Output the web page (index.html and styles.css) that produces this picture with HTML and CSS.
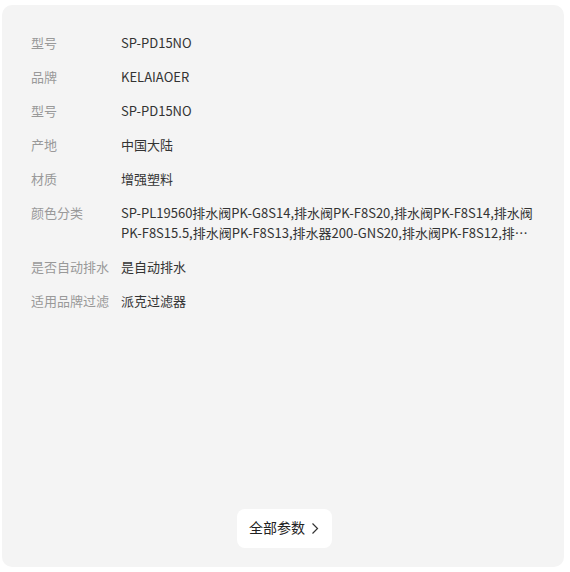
FILE: index.html
```html
<!DOCTYPE html>
<html lang="zh-CN">
<head>
  <meta charset="UTF-8" />
  <title>商品参数</title>
  <link rel="stylesheet" href="styles.css">
</head>
<body>
  <!-- Parameter panel -->
  <div class="params">
    <div class="param-list">
      <div class="param-row">
        <span class="param-label">型号</span>
        <span class="param-value">SP-PD15NO</span>
      </div>
      <div class="param-row">
        <span class="param-label">品牌</span>
        <span class="param-value">KELAIAOER</span>
      </div>
      <div class="param-row">
        <span class="param-label">型号</span>
        <span class="param-value">SP-PD15NO</span>
      </div>
      <div class="param-row">
        <span class="param-label">产地</span>
        <span class="param-value">中国大陆</span>
      </div>
      <div class="param-row">
        <span class="param-label">材质</span>
        <span class="param-value">增强塑料</span>
      </div>
      <div class="param-row">
        <span class="param-label">颜色分类</span>
        <span class="param-value clamp">SP-PL19560排水阀PK-G8S14,排水阀PK-F8S20,排水阀PK-F8S14,排水阀PK-F8S15.5,排水阀PK-F8S13,排水器200-GNS20,排水阀PK-F8S12,排水阀PK-F8S10</span>
      </div>
      <div class="param-row">
        <span class="param-label">是否自动排水</span>
        <span class="param-value">是自动排水</span>
      </div>
      <div class="param-row">
        <span class="param-label">适用品牌过滤</span>
        <span class="param-value">派克过滤器</span>
      </div>
    </div>

    <!-- Show all button -->
    <button class="more-btn">全部参数
      <svg class="chevron" width="8" height="13" viewBox="0 0 8 13"><path d="M1.5 1.5 L6.5 6.5 L1.5 11.5" fill="none" stroke="#333" stroke-width="1.2"/></svg>
    </button>
  </div>
</body>
</html>
```

FILE: styles.css
```css
body {
  margin: 0;
  background: #fff;
  font-family: "Noto Sans CJK SC", sans-serif;
}

/* grey card holding all params */
.params {
  box-sizing: border-box;
  width: 562px;
  height: 562px;
  margin: 5px 0 0 2px;
  padding: 28px 27px 19px 29px;
  background: #f4f4f4;
  border-radius: 10px;
  display: flex;
  flex-direction: column;
}

.param-row {
  display: flex;
  font-size: 13px;
  line-height: 20px;
  margin-bottom: 14px;
}

.param-label {
  flex: none;
  width: 90px;
  color: #999;
  white-space: nowrap;
}

.param-value {
  color: #333;
  flex: 1;
  min-width: 0;
}

/* long value limited to two lines */
.clamp {
  display: -webkit-box;
  -webkit-line-clamp: 2;
  -webkit-box-orient: vertical;
  max-height: 40px;
  overflow: hidden;
}

.more-btn {
  margin: auto auto 0;
  height: 39px;
  width: 95px;
  padding: 0 0 4px 0;
  border: none;
  border-radius: 8px;
  background: #fff;
  color: #222;
  font-family: inherit;
  font-size: 14px;
  display: flex;
  align-items: center;
  justify-content: center;
  gap: 6px;
}

.chevron {
  margin-top: 3px;
}
```
